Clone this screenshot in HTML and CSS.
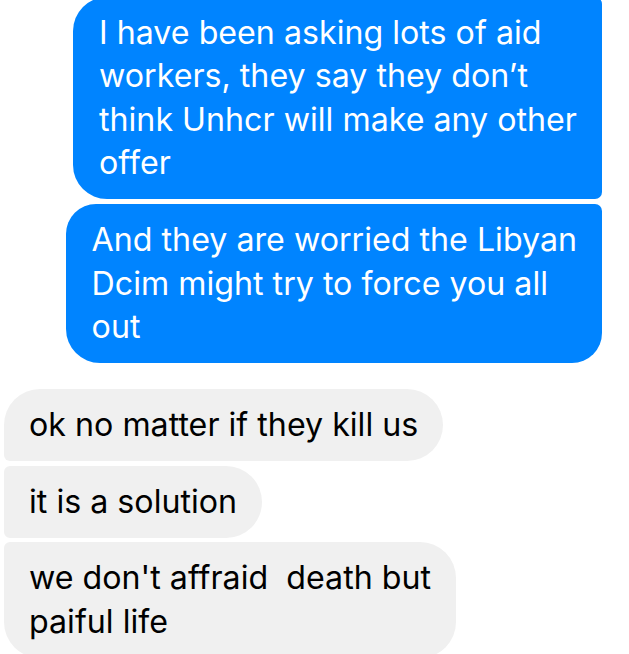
FILE: index.html
```html
<!DOCTYPE html>
<html lang="en">
<head>
<meta charset="utf-8">
<title>Chat</title>
<link rel="stylesheet" href="styles.css">
</head>
<body>
<main class="thread">
  <section class="group group-out">
    <div class="bubble out first">I have been asking lots of aid<br>workers, they say they don’t<br>think Unhcr will make any other<br>offer</div>
    <div class="bubble out last">And they are worried the Libyan<br>Dcim might try to force you all<br>out</div>
  </section>
  <section class="group group-in">
    <div class="bubble in first">ok no matter if they kill us</div>
    <div class="bubble in middle">it is a solution</div>
    <div class="bubble in last">we don't affraid&nbsp; death but<br>paiful life</div>
  </section>
</main>
</body>
</html>
```
FILE: styles.css
```css
html, body {
  margin: 0;
  padding: 0;
  background: #ffffff;
}
body {
  width: 629px;
  height: 654px;
  overflow: hidden;
  font-family: "Inter", "Liberation Sans", sans-serif;
  font-size: 32.2px;
  line-height: 43.5px;
  -webkit-font-smoothing: antialiased;
}
.thread {
  display: flex;
  flex-direction: column;
  gap: 26px;
  margin-top: -3.5px;
}
.group {
  display: flex;
  flex-direction: column;
  gap: 5px;
}
.group-out {
  align-items: flex-end;
  padding-right: 27px;
}
.group-in {
  align-items: flex-start;
  padding-left: 4px;
  gap: 4.5px;
}
.bubble {
  white-space: nowrap;
  padding: 14.25px 25px 14.25px 26px;
}
.out {
  background: #0084ff;
  color: #ffffff;
}
.out.first {
  border-radius: 34px 7px 7px 34px;
}
.out.last {
  border-radius: 30px 7px 30px 34px;
}
.in {
  background: #f0f0f0;
  color: #000000;
  padding-left: 25px;
}
.in.first {
  border-radius: 36px 36px 36px 6px;
}
.in.middle {
  border-radius: 6px 36px 36px 6px;
}
.in.last {
  border-radius: 6px 36px 36px 36px;
}
```
